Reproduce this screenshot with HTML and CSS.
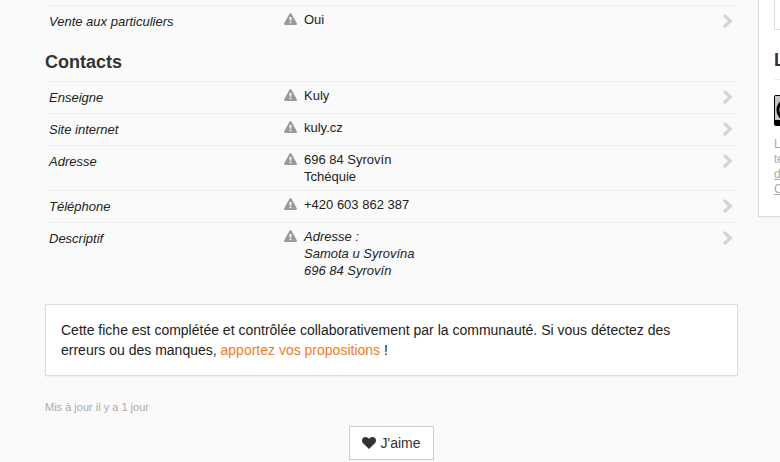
FILE: index.html
```html
<!DOCTYPE html>
<html lang="fr">
<head>
  <meta charset="UTF-8" />
  <meta name="viewport" content="width=device-width, initial-scale=1.0" />
  <title>Kuly</title>
  <link rel="stylesheet" href="styles.css">
</head>
<body>
  <!-- Shared icons -->
  <svg class="sprite" width="0" height="0">
    <symbol id="warn" viewBox="0 0 13 12">
      <path fill-rule="evenodd" d="M6.5 0 C6.9 0 7.2 .2 7.4 .5 L12.9 10.6 C13.2 11.3 12.8 12 12 12 H1 C.2 12 -.2 11.3 .1 10.6 L5.6 .5 C5.8 .2 6.1 0 6.5 0 Z M5.4 4 L5.8 7.8 H7.2 L7.6 4 Z M5.6 8.7 V10.3 H7.4 V8.7 Z" />
    </symbol>
    <symbol id="chevron" viewBox="0 0 10 14">
      <path d="M2 2 L7.3 7 L2 12" fill="none" stroke="currentColor" stroke-width="3.3" stroke-linecap="round" />
    </symbol>
  </svg>

  <div class="page">
    <main class="main">
      <table class="infos">
        <tr>
          <th>Vente aux particuliers</th>
          <td class="flag"><svg class="warn"><use href="#warn" /></svg></td>
          <td>Oui</td>
          <td class="more"><svg class="chevron"><use href="#chevron" /></svg></td>
        </tr>
      </table>

      <h2>Contacts</h2>
      <table class="infos">
        <tr>
          <th>Enseigne</th>
          <td class="flag"><svg class="warn"><use href="#warn" /></svg></td>
          <td>Kuly</td>
          <td class="more"><svg class="chevron"><use href="#chevron" /></svg></td>
        </tr>
        <tr>
          <th>Site internet</th>
          <td class="flag"><svg class="warn"><use href="#warn" /></svg></td>
          <td>kuly.cz</td>
          <td class="more"><svg class="chevron"><use href="#chevron" /></svg></td>
        </tr>
        <tr>
          <th>Adresse</th>
          <td class="flag"><svg class="warn"><use href="#warn" /></svg></td>
          <td>696 84 Syrovín<br>Tchéquie</td>
          <td class="more"><svg class="chevron"><use href="#chevron" /></svg></td>
        </tr>
        <tr>
          <th>Téléphone</th>
          <td class="flag"><svg class="warn"><use href="#warn" /></svg></td>
          <td>+420 603 862 387</td>
          <td class="more"><svg class="chevron"><use href="#chevron" /></svg></td>
        </tr>
        <tr>
          <th>Descriptif</th>
          <td class="flag"><svg class="warn"><use href="#warn" /></svg></td>
          <td><em>Adresse :<br>Samota u Syrovína<br>696 84 Syrovín</em></td>
          <td class="more"><svg class="chevron"><use href="#chevron" /></svg></td>
        </tr>
      </table>

      <p class="notice">Cette fiche est complétée et contrôlée collaborativement par la communauté. Si vous détectez des erreurs ou des manques, <a href="#">apportez vos propositions</a> !</p>

      <p class="updated">Mis à jour il y a 1 jour</p>

      <div class="actions">
        <button type="button" class="like">
          <svg class="heart" viewBox="0 0 14 12"><path d="M7 12 L1.1 6.2 C-.4 4.6 -.3 2.2 1 1 C2.8 -.6 5.6 -.2 7 2 C8.4 -.2 11.2 -.6 13 1 C14.3 2.2 14.4 4.6 12.9 6.2 Z" /></svg>
          J'aime
        </button>
      </div>
    </main>

    <aside class="side">
      <div class="frame"></div>
      <h2>L</h2>
      <svg class="badge" viewBox="0 0 88 31">
        <rect width="88" height="31" rx="2" fill="#000" />
        <rect x="1" y="1" width="86" height="24" fill="#c3c8c2" />
        <circle cx="14" cy="15" r="10" fill="#fff" stroke="#000" stroke-width="3" />
      </svg>
      <p class="licence">L<br>te<br><a href="#">d</a><br><a href="#">C</a></p>
    </aside>
  </div>
</body>
</html>
```

FILE: styles.css
```css
* { box-sizing: border-box; }
body { margin: 0; overflow-x: hidden; background: #fafafa; color: #333; font: 14px/20px "Liberation Sans", Arial, sans-serif; }
a { color: #f47c20; text-decoration: none; }
h2 { margin: 0; font-size: 18px; line-height: 20px; }
.sprite { display: block; height: 0; }

.page { display: flex; align-items: flex-start; gap: 20px; margin-right: -218px; padding-left: 45px; }
.main { flex: 1; padding-top: 5px; }
.main h2 { padding: 15px 0 9px; }

.infos { width: 100%; border-collapse: separate; border-spacing: 0; font-size: 13px; line-height: 17px; color: #222; }
.infos th, .infos td { padding: 5px 0; border-top: 1px solid #eee; vertical-align: top; text-align: left; }
.infos th { width: 239px; padding: 7px 4px; font-weight: normal; font-style: italic; }
.infos .flag { width: 20px; }
.infos .more { width: 15px; padding-top: 8px; }
.warn { display: block; width: 13px; height: 12px; margin-top: 2px; fill: #999; }
.chevron { display: block; width: 10px; height: 14px; color: #d5d5d5; }

.notice { margin: 20px 0 0; padding: 15px 40px 15px 15px; background: #fff; border: 1px solid #ddd; box-shadow: 0 1px 2px rgba(0, 0, 0, 0.05); color: #222; }
.updated { margin: 21px 0 0; font-size: 11px; color: #aaa; }
.actions { margin-top: 9px; text-align: center; }
.like { display: inline-flex; align-items: center; gap: 4px; padding: 6px 12px; border: 1px solid #ccc; background: #fff; color: #333; font: inherit; }
.heart { width: 14px; height: 12px; fill: #333; }

.side { flex: 0 0 240px; padding: 0 15px 19px; background: #fff; border: 1px solid #ddd; border-top: 0; box-shadow: 0 1px 2px rgba(0, 0, 0, 0.05); }
.frame { height: 30px; border: 1px solid #ddd; border-top: 0; }
.side h2 { padding: 20px 0 9px; border-bottom: 1px solid #eee; }
.badge { display: block; width: 88px; height: 31px; margin-top: 15px; }
.licence { margin: 11px 0 0; font-size: 12px; line-height: 15px; color: #aaa; }
.licence a { color: #aaa; text-decoration: underline; }
```
